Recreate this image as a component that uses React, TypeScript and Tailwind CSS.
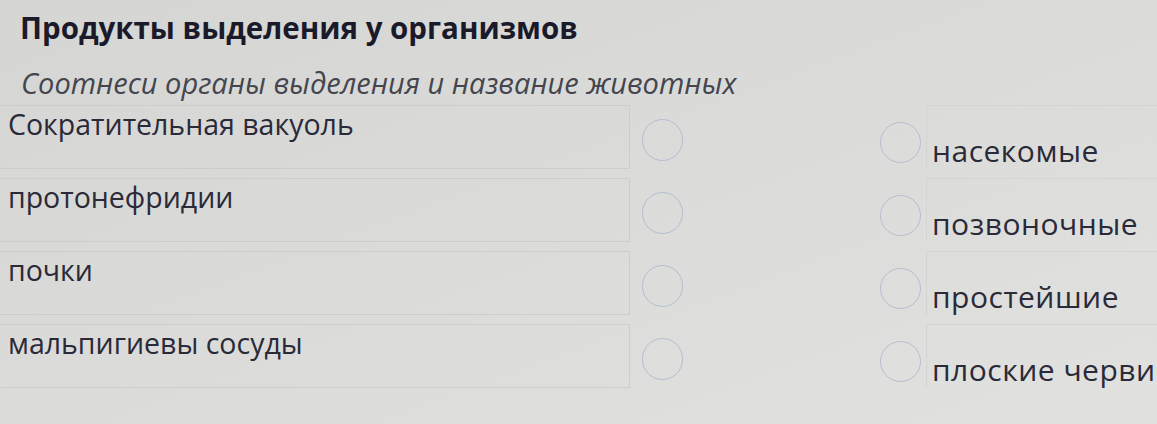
import React from "react";

const rows = [
  { l: "Сократительная вакуоль", r: "насекомые" },
  { l: "протонефридии", r: "позвоночные" },
  { l: "почки", r: "простейшие" },
  { l: "мальпигиевы сосуды", r: "плоские черви" },
];

export default function App() {
  return (
    <div
      className="w-[1157px] h-[424px] overflow-hidden bg-gradient-to-br from-[#d5d6d4] via-[#dbdcda] to-[#e1e2e0] text-[#2a2a38] pt-[8px]"
      style={{ fontFamily: '"Open Sans", "Noto Sans", sans-serif' }}
    >
      <div className="pl-[20px] text-[29.5px] font-bold leading-[40px] text-[#1a1a2a]">
        Продукты выделения у организмов
      </div>
      <div className="pl-[21px] mt-[15px] text-[29px] italic leading-[40px] text-[#45454e]">
        Соотнеси органы выделения и название животных
      </div>
      <div className="flex flex-col gap-[9px] pt-[2px]">
        {rows.map((row, i) => (
          <div key={i} className="flex h-[64px] items-stretch">
            <div className="w-[630px] shrink-0 border-y border-r border-[#cdcecb] pl-[8px] text-[28.5px] leading-[36px]">
              {row.l}
            </div>
            <div className="w-[296px] shrink-0 flex items-start pl-[12px]">
              <div className="mt-[14px] h-[42px] w-[41px] rounded-full border-[1.5px] border-[#b3bcd2]" />
              <div className="ml-[197px] mt-[17px] h-[41px] w-[41px] rounded-full border-[1.5px] border-[#b6bdd0]" />
            </div>
            <div className="flex-1 border-l border-t border-[#d4d5d2] pl-[5px] pt-[27px] text-[30px] leading-[36px] tracking-[0.5px] whitespace-nowrap">
              {row.r}
            </div>
          </div>
        ))}
      </div>
    </div>
  );
}
